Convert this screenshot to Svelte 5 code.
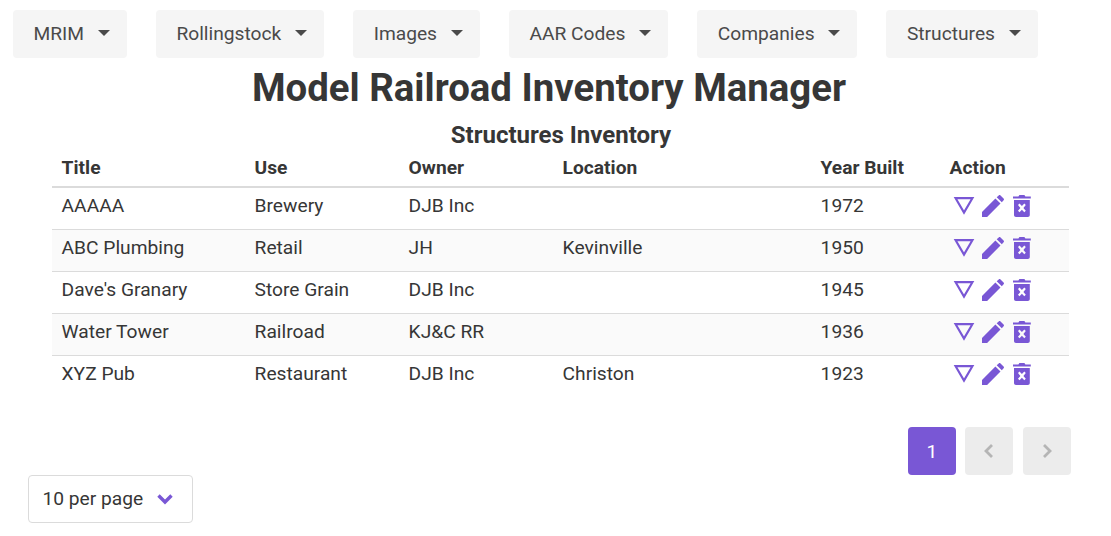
<script lang="ts">
  const menus = ['MRIM', 'Rollingstock', 'Images', 'AAR Codes', 'Companies', 'Structures'];

  const rows = [
    { title: 'AAAAA', use: 'Brewery', owner: 'DJB Inc', location: '', year: 1972 },
    { title: 'ABC Plumbing', use: 'Retail', owner: 'JH', location: 'Kevinville', year: 1950 },
    { title: "Dave's Granary", use: 'Store Grain', owner: 'DJB Inc', location: '', year: 1945 },
    { title: 'Water Tower', use: 'Railroad', owner: 'KJ&C RR', location: '', year: 1936 },
    { title: 'XYZ Pub', use: 'Restaurant', owner: 'DJB Inc', location: 'Christon', year: 1923 },
  ];
</script>

<div class="page">
  <nav class="menus">
    {#each menus as menu}
      <button class="menu">
        <span>{menu}</span>
        <span class="caret"></span>
      </button>
    {/each}
  </nav>

  <h1>Model Railroad Inventory Manager</h1>

  <div class="inventory">
    <h2>Structures Inventory</h2>
    <table>
      <colgroup>
        <col style="width: 193px" />
        <col style="width: 154px" />
        <col style="width: 154px" />
        <col style="width: 258px" />
        <col style="width: 129px" />
        <col />
      </colgroup>
      <thead>
        <tr>
          <th>Title</th>
          <th>Use</th>
          <th>Owner</th>
          <th>Location</th>
          <th>Year Built</th>
          <th>Action</th>
        </tr>
      </thead>
      <tbody>
        {#each rows as row}
          <tr>
            <td>{row.title}</td>
            <td>{row.use}</td>
            <td>{row.owner}</td>
            <td>{row.location}</td>
            <td>{row.year}</td>
            <td>
              <div class="actions">
                <svg width="24" height="24" viewBox="0 0 24 24">
                  <path d="M3.600 5.200H20.400L12 19.600Z" fill="none" stroke="currentColor" stroke-width="2.200" />
                </svg>
                <svg width="24" height="24" viewBox="0 0 24 24">
                  <path d="M1 24V18.900L14.400 5.500L19.500 10.600L6.100 24ZM15.700 4.200L17.700 2.400C18.200 1.900 19 1.900 19.500 2.400L22.600 5.500C23.100 6 23.100 6.800 22.600 7.300L20.800 9.300Z" fill="currentColor" />
                </svg>
                <svg width="24" height="24" viewBox="0 0 24 24">
                  <path fill-rule="evenodd" d="M4 7H19.800V22C19.800 23.200 19 24 17.800 24H6C4.800 24 4 23.200 4 22ZM9.500 10.600L8 12.100L10.400 14.900L8 17.700L9.500 19.200L11.900 16.800L14.300 19.200L15.800 17.700L13.400 14.900L15.800 12.100L14.300 10.600L11.900 13.100Z M3 3.400H8.400L9.400 2H14.400L15.400 3.400H20.800V5.600H3Z" fill="currentColor" />
                </svg>
              </div>
            </td>
          </tr>
        {/each}
      </tbody>
    </table>
  </div>

  <div class="pagination">
    <span class="page-btn current">1</span>
    <span class="page-btn disabled">
      <svg width="12" height="16" viewBox="0 0 12 16"><path d="M9 2L3 8L9 14" fill="none" stroke="currentColor" stroke-width="2.800" /></svg>
    </span>
    <span class="page-btn disabled">
      <svg width="12" height="16" viewBox="0 0 12 16"><path d="M3 2L9 8L3 14" fill="none" stroke="currentColor" stroke-width="2.800" /></svg>
    </span>
  </div>

  <div class="per-page">
    <span class="per-page-label">10 per page</span>
    <svg width="16" height="12" viewBox="0 0 16 12"><path d="M1.500 2.500L8 9L14.500 2.500" fill="none" stroke="currentColor" stroke-width="3.400" /></svg>
  </div>
</div>

<style>
  :global(body) {
    margin: 0;
    background: #fff;
  }

  .page {
    width: 1098px;
    height: 536px;
    overflow: hidden;
    font-family: Roboto, sans-serif;
    font-size: 19.2px;
    color: #363636;
  }

  .menus {
    display: flex;
    gap: 29.4px;
    padding: 10px 0 0 13px;
  }

  .menu {
    display: flex;
    align-items: center;
    gap: 13.5px;
    height: 48px;
    padding: 0 17px 2px 20.5px;
    border: none;
    border-radius: 4px;
    background: #f5f5f5;
    color: #4a4a4a;
    font: inherit;
  }

  .caret {
    width: 0;
    height: 0;
    border-left: 6px solid transparent;
    border-right: 6px solid transparent;
    border-top: 6px solid #4a4a4a;
  }

  h1 {
    margin: 6px 0 0;
    font-size: 38.4px;
    line-height: 48px;
    font-weight: 700;
    text-align: center;
  }

  .inventory {
    margin-left: 52px;
    width: 1017px;
  }

  h2 {
    margin: 8px 0 0;
    padding-left: 1px;
    font-size: 24px;
    line-height: 30px;
    font-weight: 700;
    text-align: center;
  }

  table {
    width: 100%;
    table-layout: fixed;
    border-collapse: collapse;
  }

  th {
    height: 37px;
    padding: 0 9.6px 2px;
    box-sizing: border-box;
    text-align: left;
    font-weight: 700;
    border-bottom: 2px solid #dbdbdb;
  }

  td {
    height: 42px;
    padding: 0 9.6px 6px;
    box-sizing: border-box;
    border-bottom: 1px solid #dbdbdb;
  }

  tbody tr:nth-child(even) {
    background: #fafafa;
  }

  tbody tr:last-child td {
    border-bottom: none;
  }

  .actions {
    display: flex;
    color: #7957d5;
    padding-left: 2.400px;
    gap: 5px;
  }

  .pagination {
    display: flex;
    justify-content: flex-end;
    gap: 9.6px;
    margin: 30px 27px 0 0;
  }

  .page-btn {
    display: flex;
    align-items: center;
    justify-content: center;
    width: 48px;
    height: 48px;
    border-radius: 4px;
  }

  .current {
    background: #7957d5;
    color: #fff;
  }

  .disabled {
    background: #ececec;
    color: #b5b5b5;
  }

  .per-page {
    display: flex;
    align-items: center;
    justify-content: space-between;
    box-sizing: border-box;
    width: 165px;
    height: 48px;
    margin-left: 28px;
    padding: 0 19px 0 13.5px;
    border: 1px solid #dbdbdb;
    border-radius: 4px;
    color: #363636;
  }

  .per-page-label {
    margin-bottom: 2px;
  }

  .per-page svg {
    color: #7957d5;
  }
</style>
